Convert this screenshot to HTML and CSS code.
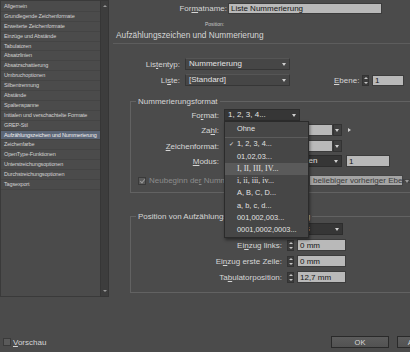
FILE: index.html
```html
<!DOCTYPE html>
<html lang="de">
<head>
    <meta charset="UTF-8">
    <title>Absatzformatoptionen</title>
    <link rel="stylesheet" href="styles.css">
</head>
<body>
    <div class="dialog">
        <div class="top">
            <!-- Kategorienliste -->
            <div class="sidebar">
                <ul class="cat-list">
                    <li>Allgemein</li>
                    <li>Grundlegende Zeichenformate</li>
                    <li>Erweiterte Zeichenformate</li>
                    <li>Einzüge und Abstände</li>
                    <li>Tabulatoren</li>
                    <li>Absatzlinien</li>
                    <li>Absatzschattierung</li>
                    <li>Umbruchoptionen</li>
                    <li>Silbentrennung</li>
                    <li>Abstände</li>
                    <li>Spaltenspanne</li>
                    <li>Initialen und verschachtelte Formate</li>
                    <li>GREP-Stil</li>
                    <li class="active">Aufzählungszeichen und Nummerierung</li>
                    <li>Zeichenfarbe</li>
                    <li>OpenType-Funktionen</li>
                    <li>Unterstreichungsoptionen</li>
                    <li>Durchstreichungsoptionen</li>
                    <li>Tagsexport</li>
                </ul>
                <div class="scrollbar">
                    <span class="sb-arrow up"></span>
                    <span class="sb-arrow down"></span>
                </div>
            </div>

            <div class="main">
                <div class="row name-row">
                    <span class="lbl lbl-name">For<u>m</u>atname:</span>
                    <span class="field name-field">Liste Nummerierung</span>
                </div>
                <div class="pos-caption">Position:</div>
                <h2 class="section-title">Aufzählungszeichen und Nummerierung</h2>
                <div class="rule"></div>

                <div class="row list-row first">
                    <span class="lbl lbl-list">Lis<u>t</u>entyp:</span>
                    <span class="select list-select">Nummerierung</span>
                </div>
                <div class="row list-row">
                    <span class="lbl lbl-list">Li<u>s</u>te:</span>
                    <span class="select list-select">[Standard]</span>
                    <span class="lbl lbl-ebene"><u>E</u>bene:</span>
                    <span class="spinner"></span>
                    <span class="field ebene-field">1</span>
                </div>

                <!-- Nummerierungsformat -->
                <fieldset class="group group-format">
                    <legend>Nummerierungsformat</legend>
                    <div class="row r-format">
                        <span class="lbl lbl-group">Fo<u>r</u>mat:</span>
                        <span class="select dark format-select">1, 2, 3, 4...
                            <div class="menu">
                                <div class="menu-item">Ohne</div>
                                <div class="menu-sep"></div>
                                <div class="menu-item checked">1, 2, 3, 4...</div>
                                <div class="menu-item">01,02,03...</div>
                                <div class="menu-item hover roman">I, II, III, IV...</div>
                                <div class="menu-item roman">i, ii, iii, iv...</div>
                                <div class="menu-item">A, B, C, D...</div>
                                <div class="menu-item">a, b, c, d...</div>
                                <div class="menu-item">001,002,003...</div>
                                <div class="menu-item">0001,0002,0003...</div>
                            </div>
                        </span>
                    </div>
                    <div class="row r-zahl">
                        <span class="lbl lbl-group">Za<u>h</u>l:</span>
                        <span class="field combo-field">^#.^t</span>
                        <span class="combo-btn"></span>
                        <span class="flyout"></span>
                    </div>
                    <div class="row r-zeichen">
                        <span class="lbl lbl-group"><u>Z</u>eichenformat:</span>
                        <span class="field combo-field">[Ohne]</span>
                        <span class="combo-btn"></span>
                    </div>
                    <div class="row r-modus">
                        <span class="lbl lbl-group"><u>M</u>odus:</span>
                        <span class="select dark modus-select">Nummerierung fortführen</span>
                        <span class="field modus-field">1</span>
                    </div>
                    <div class="row r-check">
                        <span class="check-label">
                            <span class="checkbox is-checked"></span>
                            <span>Neubeginn de<u>r</u> Nummerierung nach:</span>
                        </span>
                        <span class="select grey-select">beliebiger vorheriger Ebene</span>
                    </div>
                </fieldset>

                <!-- Position -->
                <fieldset class="group group-pos">
                    <legend>Position von Aufzählungszeichen/Nummerierung</legend>
                    <div class="row r-pos first">
                        <span class="lbl lbl-pos">Ausrichtung:</span>
                        <span class="select dark align-select">Links</span>
                    </div>
                    <div class="row r-pos">
                        <span class="lbl lbl-pos">Ei<u>n</u>zug links:</span>
                        <span class="spinner"></span>
                        <span class="field pos-field">0 mm</span>
                    </div>
                    <div class="row r-pos">
                        <span class="lbl lbl-pos">Ei<u>n</u>zug erste Zeile:</span>
                        <span class="spinner"></span>
                        <span class="field pos-field">0 mm</span>
                    </div>
                    <div class="row r-pos">
                        <span class="lbl lbl-pos">Ta<u>b</u>ulatorposition:</span>
                        <span class="spinner"></span>
                        <span class="field pos-field">12,7 mm</span>
                    </div>
                </fieldset>
            </div>
        </div>

        <div class="footer">
            <label class="preview">
                <span class="checkbox"></span>
                <span><u>V</u>orschau</span>
            </label>
            <button class="btn">OK</button>
            <button class="btn">Abbrechen</button>
        </div>
    </div>
</body>
</html>
```

FILE: styles.css
```css
/* Basis */
* {
    margin: 0;
    padding: 0;
    box-sizing: border-box;
}

body {
    width: 410px;
    height: 352px;
    overflow: hidden;
    background: #4b4b4b;
    color: #d6d6d6;
    font-family: 'Liberation Sans', Arial, sans-serif;
    font-size: 8px;
}

u {
    text-decoration-thickness: 1px;
}

.top {
    display: flex;
    height: 297px;
}

/* Kategorienliste links */
.sidebar {
    display: flex;
    width: 109px;
    flex-shrink: 0;
}

.cat-list {
    list-style: none;
    width: 100px;
    border: 1px solid #3a3a3a;
    border-right: none;
    padding-top: 1px;
    font-size: 5.5px;
    letter-spacing: -0.15px;
}

.cat-list li {
    height: 9.9px;
    line-height: 9px;
    padding-left: 3px;
    border-bottom: 1px solid #444;
    white-space: nowrap;
    overflow: hidden;
    color: #d2d2d2;
}

.cat-list li.active {
    background: #5b6677;
    color: #f0f0f0;
}

.scrollbar {
    width: 9px;
    background: #3d3d3d;
    border: 1px solid #363636;
    display: flex;
    flex-direction: column;
    justify-content: space-between;
    align-items: center;
    padding: 4px 0;
}

.sb-arrow {
    width: 0;
    height: 0;
    border-left: 2px solid transparent;
    border-right: 2px solid transparent;
}

.sb-arrow.up {
    border-bottom: 2px solid #9a9a9a;
}

.sb-arrow.down {
    border-top: 2px solid #9a9a9a;
}

/* rechter Bereich */
.main {
    flex: 1;
    min-width: 0;
}

.row {
    display: flex;
    align-items: center;
    height: 12px;
    white-space: nowrap;
}

.lbl {
    flex-shrink: 0;
    text-align: right;
}

.field {
    height: 100%;
    background: #b9b9b9;
    color: #151515;
    padding-left: 2px;
    line-height: 11px;
    border: 1px solid #3c3c3c;
    flex-shrink: 0;
    overflow: hidden;
}

.select {
    position: relative;
    display: block;
    height: 100%;
    line-height: 10px;
    padding-left: 3px;
    background: #464646;
    border: 1px solid #363636;
    border-top-color: #555;
    color: #e2e2e2;
    flex-shrink: 0;
}

.select::after {
    content: '';
    position: absolute;
    right: 3px;
    top: 4px;
    border-left: 2px solid transparent;
    border-right: 2px solid transparent;
    border-top: 3px solid #cfcfcf;
}

.select.dark {
    background: #363636;
    border-color: #2d2d2d;
}

.name-row {
    margin-top: 3px;
    height: 11px;
}

.lbl-name {
    width: 119px;
    padding-right: 1px;
}

.name-field {
    width: 154px;
    line-height: 9px;
}

.pos-caption {
    margin-top: 7px;
    height: 6px;
    padding-left: 96px;
    font-size: 5px;
    line-height: 6px;
    color: #c8c8c8;
}

.section-title {
    margin-top: 3px;
    padding-left: 7px;
    font-size: 8.3px;
    font-weight: normal;
    line-height: 10px;
}

.rule {
    margin: 3px 0 0 4px;
    border-top: 1px solid #5d5d5d;
}

.list-row {
    margin-top: 4px;
}

.list-row.first {
    margin-top: 14px;
}

.lbl-list {
    width: 71px;
    margin-right: 5px;
}

.list-select {
    width: 105px;
}

.lbl-ebene {
    width: 24px;
    margin-left: 44px;
    margin-right: 4px;
}

.spinner {
    position: relative;
    width: 7px;
    height: 11px;
    margin-right: 3px;
    background: #3c3c3c;
    border: 1px solid #333;
    flex-shrink: 0;
}

.spinner::before,
.spinner::after {
    content: '';
    position: absolute;
    left: 1px;
    border-left: 2px solid transparent;
    border-right: 2px solid transparent;
}

.spinner::before {
    top: 1px;
    border-bottom: 2px solid #c4c4c4;
}

.spinner::after {
    bottom: 1px;
    border-top: 2px solid #c4c4c4;
}

.ebene-field {
    width: 32px;
    height: 11px;
    line-height: 9px;
}

/* Gruppen */
.group {
    border: 1px solid #626262;
    margin-left: 21px;
    margin-right: -12px;
    min-width: 0;
}

.group legend {
    margin-left: 5px;
    padding: 0 2px;
    line-height: 9px;
    font-size: 8px;
}

.group-format {
    margin-top: 11px;
    padding-bottom: 6px;
}

.lbl-group {
    width: 88px;
    margin-right: 5px;
}

.r-format {
    margin-top: 3px;
}

.r-zahl {
    margin-top: 3px;
}

.r-zeichen {
    margin-top: 4px;
}

.r-modus {
    margin-top: 3px;
}

.r-check {
    margin-top: 8px;
    height: 11px;
}

.format-select {
    width: 76px;
}

.combo-field {
    width: 109px;
}

.combo-btn {
    position: relative;
    width: 9px;
    height: 12px;
    background: #404040;
    border: 1px solid #333;
    flex-shrink: 0;
}

.combo-btn::after {
    content: '';
    position: absolute;
    left: 1px;
    top: 4px;
    border-left: 2px solid transparent;
    border-right: 2px solid transparent;
    border-top: 3px solid #cfcfcf;
}

.flyout {
    margin-left: 6px;
    border-top: 2.5px solid transparent;
    border-bottom: 2.5px solid transparent;
    border-left: 3px solid #cfcfcf;
}

.modus-select {
    width: 118px;
}

.modus-field {
    width: 44px;
    margin-left: 4px;
}

.check-label {
    display: flex;
    align-items: center;
    width: 178px;
    padding-left: 7px;
    color: #8c8c8c;
    flex-shrink: 0;
}

.checkbox {
    position: relative;
    width: 8px;
    height: 8px;
    margin-right: 3px;
    background: #5a5a5a;
    border: 1px solid #3a3a3a;
    flex-shrink: 0;
}

.checkbox.is-checked::after {
    content: '';
    position: absolute;
    left: 2px;
    top: 0;
    width: 2px;
    height: 4px;
    border-right: 1px solid #9a9a9a;
    border-bottom: 1px solid #9a9a9a;
    transform: rotate(40deg);
}

.grey-select {
    width: 94px;
    height: 11px;
    line-height: 9px;
    background: #a4a4a4;
    border-color: #444;
    color: #3a3a3a;
    overflow: visible;
}

.grey-select::after {
    right: -7px;
    border-top-color: #9a9a9a;
}

.group-pos {
    margin-top: 19px;
    padding-bottom: 9px;
}

.r-pos {
    margin-top: 4px;
}

.r-pos.first {
    margin-top: 2px;
}

.lbl-pos {
    width: 151px;
    margin-right: 5px;
}

.align-select {
    width: 56px;
}

.pos-field {
    width: 49px;
}

/* Aufklappmenü */
.menu {
    position: absolute;
    top: 11px;
    left: -1px;
    width: 85px;
    padding-top: 1px;
    background: #464646;
    border: 1px solid #2b2b2b;
    box-shadow: 1px 2px 3px rgba(0, 0, 0, 0.45);
    z-index: 10;
}

.menu-item {
    position: relative;
    height: 12.3px;
    line-height: 12.3px;
    padding-left: 12px;
    color: #e2e2e2;
    font-size: 7.4px;
}

.menu-item.hover {
    background: #5a5a5a;
}

.menu-item.roman {
    font-family: 'Liberation Serif', 'Times New Roman', serif;
    font-size: 8px;
}

.menu-item.checked::before {
    content: '\2713';
    position: absolute;
    left: 4px;
    font-size: 6px;
}

.menu-sep {
    height: 3px;
    border-bottom: 1px solid #5c5c5c;
}

/* Fußzeile */
.footer {
    display: flex;
    align-items: center;
    margin-top: 39px;
    height: 12px;
}

.preview {
    display: flex;
    align-items: center;
    width: 331px;
    padding-left: 3px;
    flex-shrink: 0;
}

.preview .checkbox {
    margin-right: 2px;
}

.btn {
    width: 58px;
    height: 12px;
    margin-right: 8px;
    flex-shrink: 0;
    background: linear-gradient(#5c5c5c, #525252);
    border: 1px solid #2a2a2a;
    color: #d8d8d8;
    font-family: inherit;
    font-size: 7.5px;
}
```
